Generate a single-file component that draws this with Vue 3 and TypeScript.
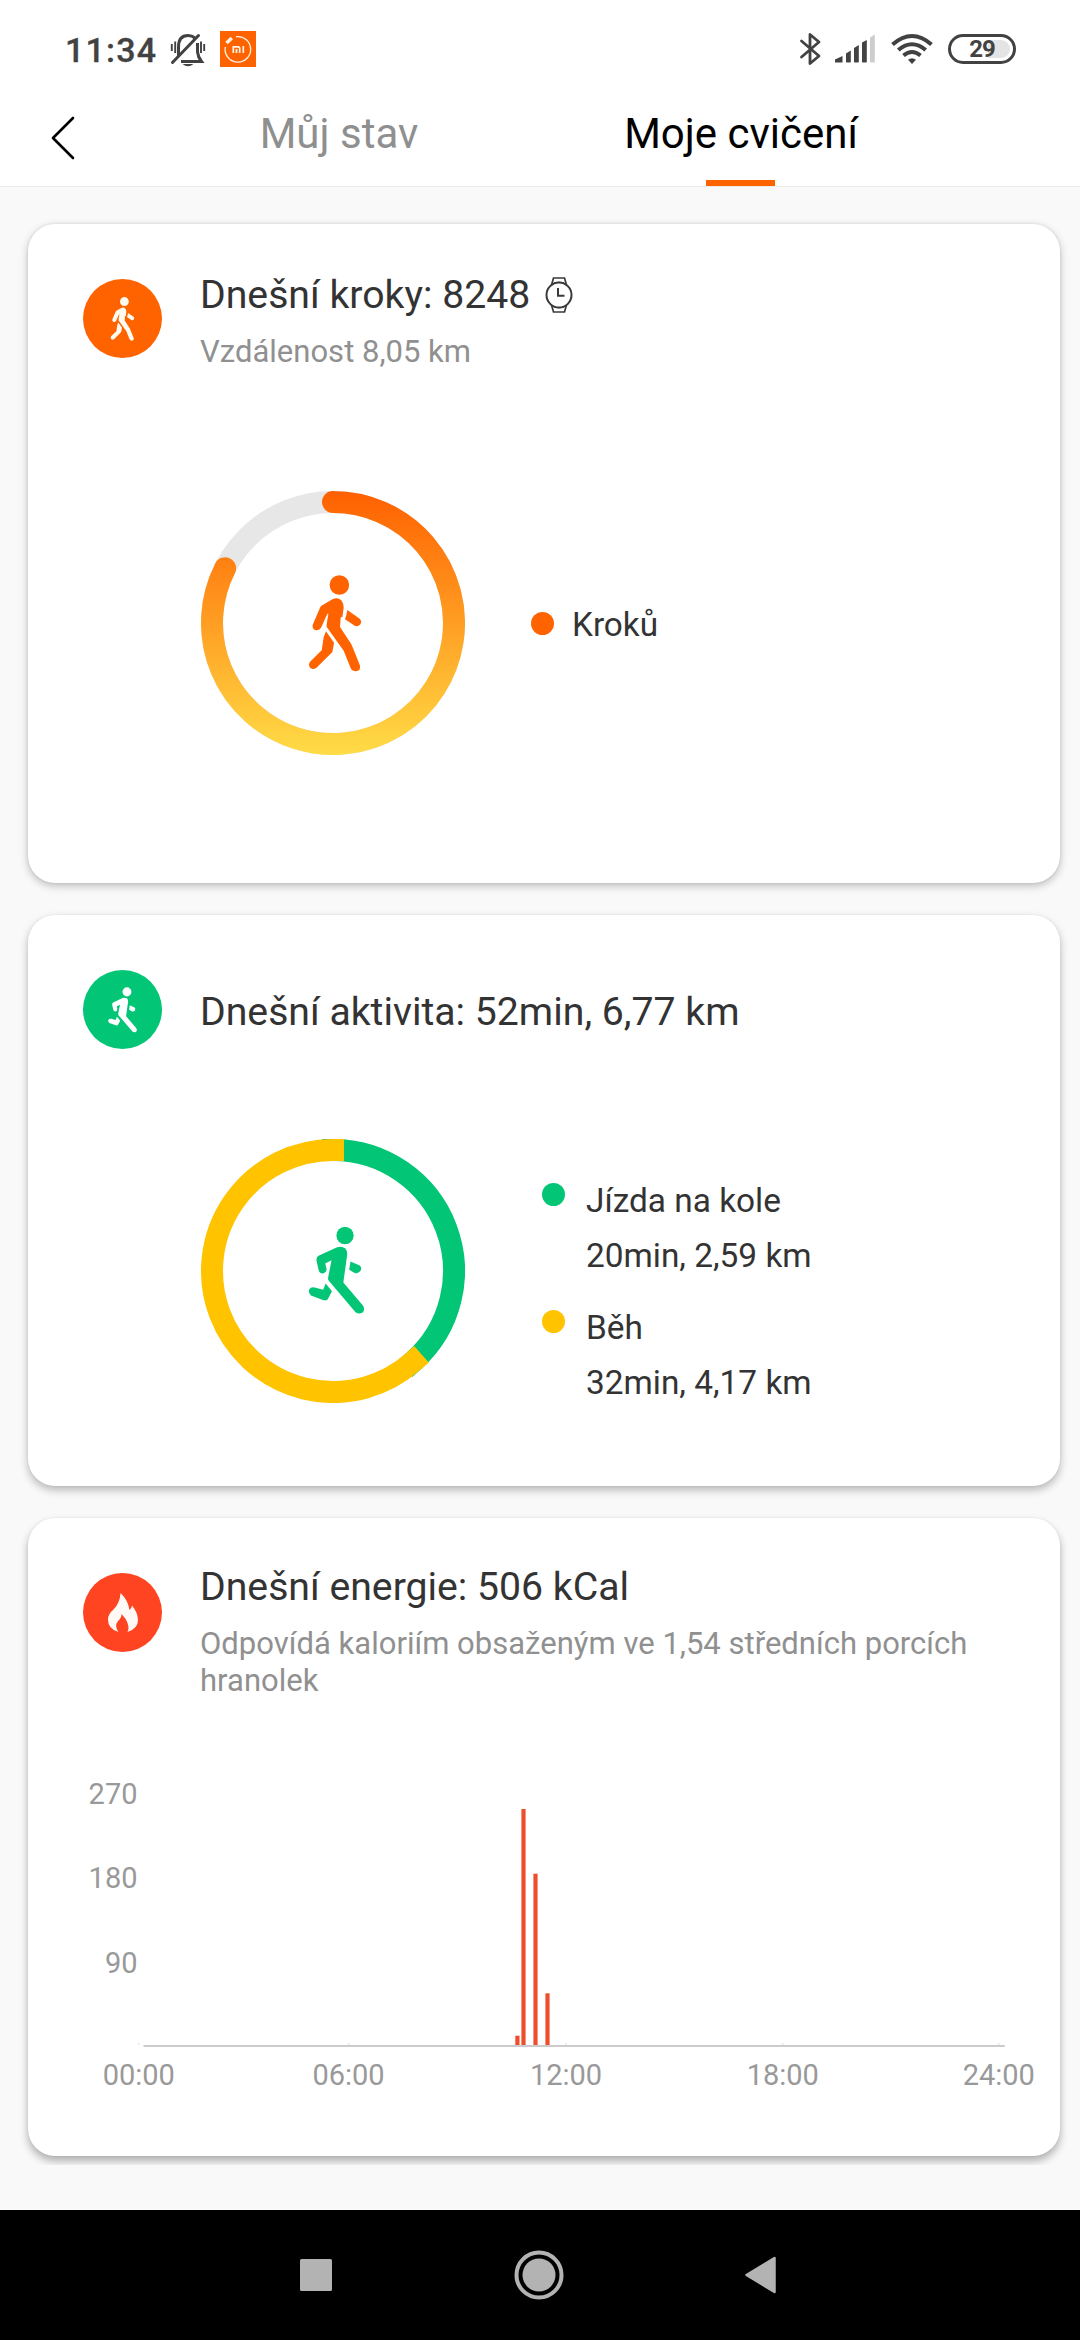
<script setup lang="ts">
interface Bar { x: number; w: number; top: number }
interface Label { x: number; text: string }
interface Scale { y: number; text: string }

const steps = 8248
const goal = 10000
const radius = 121

// Point on the ring for a clockwise angle in degrees, measured from the top
function point(deg: number): string {
  const a = (deg * Math.PI) / 180
  return `${(132 + radius * Math.sin(a)).toFixed(2)} ${(132 - radius * Math.cos(a)).toFixed(2)}`
}

function arc(from: number, to: number): string {
  const large = to - from > 180 ? 1 : 0
  return `M${point(from)} A${radius} ${radius} 0 ${large} 1 ${point(to)}`
}

const stepsArc = arc(0, (steps / goal) * 360)
const split = (20 / 52) * 360
const cyclingArc = arc(0, split)
const runningArc = arc(split, 359.99)

const activities = [
  { name: 'Jízda na kole', detail: '20min, 2,59 km', tone: 'green' },
  { name: 'Běh', detail: '32min, 4,17 km', tone: 'yellow' },
]

const baseline = 307
const bars: Bar[] = [
  { x: 487.3, w: 4.2, top: 295.7 },
  { x: 493.4, w: 4.2, top: 69 },
  { x: 505.4, w: 4.2, top: 133.7 },
  { x: 517.4, w: 4.2, top: 253.3 },
]
const scale: Scale[] = [
  { y: 64, text: '270' },
  { y: 148, text: '180' },
  { y: 232.7, text: '90' },
]
const hours: Label[] = [
  { x: 110.8, text: '00:00' },
  { x: 320.5, text: '06:00' },
  { x: 538, text: '12:00' },
  { x: 754.8, text: '18:00' },
  { x: 970.8, text: '24:00' },
]
</script>

<template>
  <div class="screen">
    <svg class="defs" width="0" height="0" aria-hidden="true">
      <symbol id="walker" viewBox="0 0 53 97">
        <g transform="scale(.33333 .33333) translate(-386 -314)">
          <ellipse cx="478" cy="344" rx="29.3" ry="29.3" />
          <path d="M428 404 L457 387 Q473 379 485 391 Q491 400 491 412 L487 440 L482 441 L480 470 L513 520 Q518 530 540 586 Q542 601 528 603 Q516 603 512 594 L491 541 L440 470 Q439 464 441 455 L445 430 L442 430 L423 472 Q416 482 405 479 Q394 473 399 461 L420 412 Q423 405 428 404 Z" />
          <path d="M502 419 L539 445 Q547 454 540 463 Q533 470 524 466 L495 447 L499 434 Z" />
          <path d="M438 483 L462 517 L457 545 L411 591 Q401 601 390 592 Q384 582 390 574 L425 540 L431 500 Z" />
        </g>
      </symbol>
      <symbol id="runner" viewBox="0 0 56 88">
        <g transform="scale(.42091 .33333) translate(-305 -320)">
          <ellipse cx="392" cy="347" rx="20.5" ry="26.3" />
          <path d="M329 408 L372 383 Q383 377 393 386 Q398 394 397 406 L388 488 L435 558 Q440 570 434 578 Q425 585 417 577 L353 482 Q351 478 352 472 L360 421 L345 431 L348 446 Q349 458 340 461 Q331 462 329 449 L324 421 Q324 411 329 408 Z" />
          <path d="M405 425 L427 437 Q432 442 429 453 Q424 462 416 460 L402 450 Z" />
          <path d="M346 491 L361 514 L351 538 Q348 543 341 541 L311 527 Q304 519 307 508 Q312 500 320 503 L340 510 Z" />
        </g>
      </symbol>
    </svg>

    <div class="status">
      <span class="clock">11:34</span>
      <svg class="bell" width="36" height="36" viewBox="0 0 36 36" fill="none" stroke="#424242" stroke-width="3">
        <path d="M8.5 24 V15 Q8.5 3.5 18 3.5 Q22 3.5 25 6" />
        <path d="M27.5 11 V20 Q28 25 31.5 29.5 H11" />
        <path d="M2.5 30.5 L28.5 3.5" stroke-linecap="round" />
        <path d="M1.8 12 V19 M5.2 9.5 V21 M34.2 12 V19 M31 9.5 V21" stroke-width="1.9" />
        <path d="M12.5 32 H23.5 Q18 36.5 12.5 32 Z" fill="#424242" stroke="none" />
      </svg>
      <svg class="mi" width="36" height="36" viewBox="0 0 36 36">
        <rect width="36" height="36" fill="#ff6300" />
        <g fill="none" stroke="#fff3e6">
          <path d="M16 5.7 A12.8 12.8 0 1 1 5.3 16" stroke-width="1.3" />
          <path d="M6.5 12 L11.8 7" stroke-width="3.4" />
          <path d="M13.3 22 V15.8 H18 Q19.7 15.8 19.7 17.5 V22 M16.5 18 V22 M23.3 15 V22" stroke-width="1.7" />
        </g>
      </svg>
      <span class="grow" />
      <svg class="radios" width="134" height="36" viewBox="0 0 134 36" fill="none" stroke="#424242">
        <path d="M2.5 10 L20 25 L11 32.5 V3.5 L20 11 L2.5 26" stroke-width="2.8" stroke-linejoin="round" stroke-linecap="round" />
        <g fill="#424242" stroke="none">
          <path d="M36 28.5 L43.5 25 V31.5 H36.5 Q36 31.5 36 31 Z" />
          <path d="M47 22.5 L51.8 19.5 V31 L51.3 31.5 H47.5 L47 31 Z" />
          <path d="M55 17 L59.8 14 V31 L59.3 31.5 H55.5 L55 31 Z" />
          <path d="M63 11.5 L67.8 9 V31 L67.3 31.5 H63.5 L63 31 Z" />
          <path d="M71 6.5 L75.8 3.5 V31 L75.3 31.5 H71.5 L71 31 Z" fill="#cdcdcd" />
          <path d="M113 33 L109 28.8 Q113 25.8 117 28.8 Z" />
        </g>
        <g stroke-width="4">
          <path d="M93.5 13.5 Q113 -3.5 132.5 13.5" />
          <path d="M99.3 19 Q113 7.5 126.7 19" />
          <path d="M104.5 24.5 Q113 17.5 121.5 24.5" />
        </g>
      </svg>
      <div class="battery"><span class="charge" /><span class="level">29</span></div>
    </div>

    <nav class="tabs">
      <svg class="back" width="24" height="44" viewBox="0 0 24 44" fill="none" stroke="#000" stroke-width="2.6" stroke-linecap="round" stroke-linejoin="round">
        <path d="M22 2 L2 22 L22 42" />
      </svg>
      <div class="tab">Můj stav</div>
      <div class="tab active">Moje cvičení<span class="mark" /></div>
    </nav>

    <main class="list">
      <section class="card steps">
        <header class="head">
          <div class="badge orange"><svg width="25" height="44"><use href="#walker" /></svg></div>
          <div class="heading">
            <h2>Dnešní kroky: 8248
              <svg class="watch" width="28" height="36" viewBox="0 0 28 36" fill="none" stroke="#3a3a3a" stroke-width="2">
                <circle cx="14" cy="18" r="12.5" />
                <path d="M6.5 8 L8.5 1 H19.5 L21.5 8 M6.5 28 L8.5 35 H19.5 L21.5 28" stroke-width="1.7" />
                <path d="M9 6 Q14 4.5 19 6 M9 30 Q14 31.5 19 30" stroke-width="1.2" />
                <path d="M13 11 V18.7 H19.5" />
              </svg>
            </h2>
            <p>Vzdálenost 8,05 km</p>
          </div>
        </header>
        <div class="summary">
          <div class="ring">
            <svg width="264" height="264" viewBox="0 0 264 264" fill="none" stroke-width="22">
              <defs>
                <linearGradient id="warm" gradientUnits="userSpaceOnUse" x1="0" y1="0" x2="0" y2="264">
                  <stop offset="0" stop-color="#ff6000" />
                  <stop offset="1" stop-color="#ffdc46" />
                </linearGradient>
              </defs>
              <circle cx="132" cy="132" :r="radius" stroke="#e7e7e7" />
              <path :d="stepsArc" stroke="url(#warm)" stroke-linecap="round" />
              <use href="#walker" x="107.7" y="84" width="53" height="97" fill="#ff6300" />
            </svg>
          </div>
          <div class="single"><i class="dot orange" /><span>Kroků</span></div>
        </div>
      </section>

      <section class="card activity">
        <header class="head">
          <div class="badge green"><svg width="29" height="46"><use href="#runner" /></svg></div>
          <div class="heading"><h2>Dnešní aktivita: 52min, 6,77 km</h2></div>
        </header>
        <div class="summary">
          <div class="ring">
            <svg width="264" height="264" viewBox="0 0 264 264" fill="none" stroke-width="22" stroke-linecap="square">
              <path :d="cyclingArc" stroke="#02c675" />
              <path :d="runningArc" stroke="#ffc300" />
              <use href="#runner" x="107.4" y="87.5" width="56" height="88" fill="#02c675" />
            </svg>
          </div>
          <ul class="legend">
            <li v-for="a in activities" :key="a.name">
              <i class="dot" :class="a.tone" />
              <div><div>{{ a.name }}</div><div>{{ a.detail }}</div></div>
            </li>
          </ul>
        </div>
      </section>

      <section class="card energy">
        <header class="head">
          <div class="badge red">
            <svg width="32" height="40" viewBox="0 0 32 40">
              <path d="M13.5 0 Q21 7 22.5 17 Q24.500 16 25 12.500 Q31 20 31 27 Q31 35.500 20.500 39 Q22.500 35 20.500 30 Q19 25.500 14.500 21 Q14.500 25 11 28 Q7 33 11.500 39 Q1 36 1 26.500 Q1 21 6.500 16.500 Q13 10 13.500 0 Z" fill="#fffaf5" />
            </svg>
          </div>
          <div class="heading">
            <h2>Dnešní energie: 506 kCal</h2>
            <p>Odpovídá kaloriím obsaženým ve 1,54 středních porcích hranolek</p>
          </div>
        </header>
        <svg class="chart" width="1032" height="370" viewBox="0 0 1032 370">
          <g class="axis">
            <text v-for="s in scale" :key="s.text" x="109.5" :y="s.y" text-anchor="end">{{ s.text }}</text>
            <text v-for="h in hours" :key="h.text" :x="h.x" y="345" text-anchor="middle">{{ h.text }}</text>
          </g>
          <rect v-for="h in hours" :key="h.text" :x="h.x - 1" :y="baseline - 4" width="2" height="2" fill="#ececec" />
          <rect v-for="b in bars" :key="b.x" :x="b.x" :y="b.top" :width="b.w" :height="baseline - 2 - b.top" fill="#ef4e2d" />
          <rect x="115.5" y="305" width="861.3" height="2" fill="#cbcbcb" />
        </svg>
      </section>
    </main>

    <footer class="system">
      <svg width="32" height="32" viewBox="0 0 32 32"><rect width="32" height="32" rx="1.5" fill="#b3b3b3" /></svg>
      <svg width="50" height="50" viewBox="0 0 50 50">
        <circle cx="25" cy="25" r="22.5" fill="none" stroke="#b3b3b3" stroke-width="4" />
        <circle cx="25" cy="25" r="16.5" fill="#b3b3b3" />
      </svg>
      <svg width="31" height="38" viewBox="0 0 31 38"><path d="M1.5 19 L29.5 2 V36 Z" fill="#b3b3b3" stroke="#b3b3b3" stroke-width="2.5" stroke-linejoin="round" /></svg>
    </footer>
  </div>
</template>

<style>
body { margin: 0; background: #f9f9f9; }
</style>

<style scoped>
.screen {
  width: 1080px;
  height: 2340px;
  display: flex;
  flex-direction: column;
  overflow: hidden;
  background: #f9f9f9;
  font-family: Roboto, "Noto Sans", sans-serif;
  color: #333;
}
.defs { position: absolute; }
svg { display: block; flex: none; }

.status {
  height: 98px;
  box-sizing: border-box;
  padding: 0 64px 0 65px;
  display: flex;
  align-items: center;
  background: #fff;
}
.clock { width: 90px; font-size: 34px; font-weight: 500; line-height: 40px; letter-spacing: 1.2px; color: #424242; margin-top: 2px; -webkit-text-stroke: .3px #424242; }
.bell { margin-left: 15px; margin-top: 2px; }
.mi { margin-left: 14px; }
.grow { flex: 1; }
.radios { margin-right: 15px; }
.battery {
  position: relative;
  width: 68px;
  height: 30px;
  box-sizing: border-box;
  border: 3px solid #424242;
  border-radius: 15px;
  display: flex;
  justify-content: center;
  align-items: center;
}
.charge { position: absolute; right: 3px; top: 3px; width: 22px; height: 18px; border-radius: 0 9px 9px 0; background: #e4e4e4; }
.level { position: relative; font-size: 24px; line-height: 24px; font-weight: 700; color: #424242; letter-spacing: -1px; }

.tabs {
  height: 89px;
  box-sizing: border-box;
  border-bottom: 1px solid #ebebeb;
  background: #fff;
  padding-left: 51px;
  display: flex;
}
.back { margin-top: 18px; margin-right: 63px; }
.tab { position: relative; width: 402px; text-align: center; font-size: 42px; line-height: 50px; padding-top: 11px; color: #8f8f8f; }
.tab.active { color: #000; }
.mark { position: absolute; left: 50%; bottom: 0; width: 69px; height: 6px; margin-left: -35px; background: #ff6300; }

.list {
  height: 1978px;
  box-sizing: border-box;
  padding: 37px 20px 9px 28px;
  display: flex;
  flex-direction: column;
  overflow: hidden;
}
.card {
  box-sizing: border-box;
  border-radius: 27px;
  background: #fff;
  box-shadow: 0 3px 8px rgba(0, 0, 0, .24), 0 0 3px rgba(0, 0, 0, .1);
}
.steps { height: 659px; margin-bottom: 32px; }
.activity { height: 571px; margin-bottom: 32px; box-shadow: 0 4px 8px rgba(0, 0, 0, .27), 0 0 2px rgba(0, 0, 0, .08); }
.energy { height: 638px; box-shadow: 0 5px 9px rgba(0, 0, 0, .3), 0 0 2px rgba(0, 0, 0, .08); }

.head { display: flex; padding: 0 60px 0 55px; box-sizing: border-box; }
.steps .head { height: 267px; }
.activity .head { height: 224px; }
.energy .head { height: 222px; }
.badge {
  width: 79px;
  height: 79px;
  margin-top: 55px;
  flex: none;
  border-radius: 50%;
  display: flex;
  align-items: center;
  justify-content: center;
  fill: #fffaf0;
}
.badge.green { fill: #fff; }
.orange { background: #ff6300; }
.green { background: #02c675; }
.yellow { background: #ffc300; }
.red { background: #ff4422; }
.heading { margin-left: 38px; padding-top: 46px; }
.steps .heading { padding-top: 48px; }
.activity .heading { padding-top: 74px; }
h2 { margin: 0; font-size: 39.2px; line-height: 46px; font-weight: 400; display: flex; align-items: center; gap: 15px; white-space: nowrap; }
p { margin: 15px 0 0; font-size: 31px; line-height: 37px; letter-spacing: .015px; color: #909090; }

.summary { display: flex; padding-left: 173px; }
.single { display: flex; align-items: center; height: 264px; margin-left: 66px; font-size: 33.3px; line-height: 40px; }
.single span { margin-left: 18px; padding-top: 4px; }
.dot { display: block; flex: none; width: 23px; height: 23px; border-radius: 50%; }
.legend { list-style: none; margin: 34px 0 0 77px; padding: 0; font-size: 33.4px; line-height: 55px; }
.legend li { display: flex; height: 127px; }
.legend .dot { margin-top: 10px; margin-right: 21px; }

.axis { font-size: 29px; fill: #999; }

.system {
  margin-top: auto;
  height: 130px;
  box-sizing: border-box;
  padding: 0 304px 0 300px;
  display: flex;
  align-items: center;
  justify-content: space-between;
  background: #000;
}
</style>
